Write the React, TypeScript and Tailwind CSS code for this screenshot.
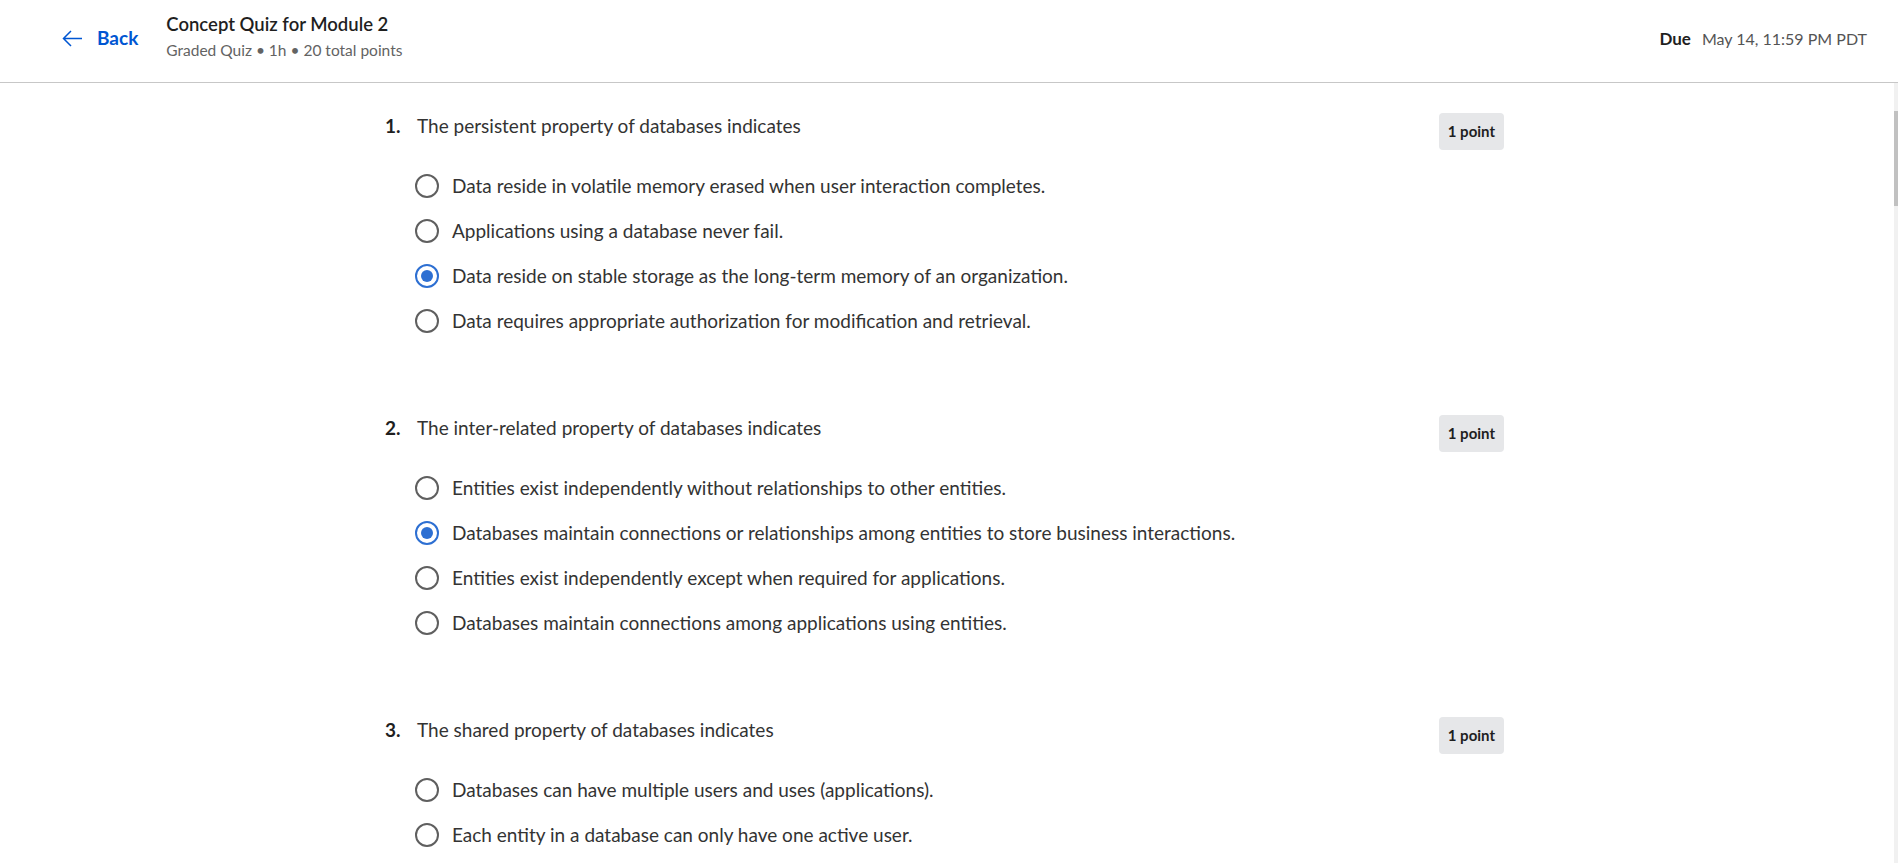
import React from "react";

type Question = {
  title: string;
  options: string[];
  selected: number | null;
};

const questions: Question[] = [
  {
    title: "The persistent property of databases indicates",
    options: [
      "Data reside in volatile memory erased when user interaction completes.",
      "Applications using a database never fail.",
      "Data reside on stable storage as the long-term memory of an organization.",
      "Data requires appropriate authorization for modification and retrieval.",
    ],
    selected: 2,
  },
  {
    title: "The inter-related property of databases indicates",
    options: [
      "Entities exist independently without relationships to other entities.",
      "Databases maintain connections or relationships among entities to store business interactions.",
      "Entities exist independently except when required for applications.",
      "Databases maintain connections among applications using entities.",
    ],
    selected: 1,
  },
  {
    title: "The shared property of databases indicates",
    options: [
      "Databases can have multiple users and uses (applications).",
      "Each entity in a database can only have one active user.",
    ],
    selected: null,
  },
];

const Radio = ({ checked }: { checked: boolean }) =>
  checked ? (
    <span className="w-6 h-6 shrink-0 rounded-full border-2 border-[#2d6fd2] flex items-center justify-center">
      <span className="w-3 h-3 rounded-full bg-[#2d6fd2]"></span>
    </span>
  ) : (
    <span className="w-6 h-6 shrink-0 rounded-full border-2 border-[#5f5f5f]"></span>
  );

const QuestionBlock = ({ q, n }: { q: Question; n: number }) => {
  return (
    <div className="mb-[72px]">
      <div className="flex items-start justify-between">
        <div className="flex pt-[1px] text-[19px] leading-6">
          <span className="w-8 font-bold text-[#1f1f1f]">{n}.</span>
          <span className="text-[#333333]">{q.title}</span>
        </div>
        <div className="h-[37px] px-[9px] flex items-center rounded-[4px] bg-[#e6e7e9] text-[15px] font-bold text-[#1f1f1f]">
          1 point
        </div>
      </div>
      <div className="mt-[13px] pl-[30px]">
        {q.options.map((opt, i) => (
          <div key={i} className="h-[45px] flex items-center gap-[13px]">
            <Radio checked={q.selected === i} />
            <span className="text-[19px] leading-6 text-[#333333]">{opt}</span>
          </div>
        ))}
      </div>
    </div>
  );
};

export default function App() {
  return (
    <div className="h-screen flex flex-col bg-white font-['Lato',sans-serif] text-[#1f1f1f] overflow-hidden">
      <header className="h-[83px] shrink-0 border-b border-[#c7c7c7] flex items-start justify-between pl-[62px] pr-[31px]">
        <div className="flex items-start">
          <button className="flex items-center gap-[14px] pt-[26px] text-[#0056d2]">
            <svg width="21" height="17" viewBox="0 0 21 17" fill="none">
              <path d="M20 8.5H1.5M9 1L1.5 8.5L9 16" stroke="#0056d2" strokeWidth="1.5" />
            </svg>
            <span className="text-[19px] leading-6 font-bold">Back</span>
          </button>
          <div className="ml-[28px] pt-[12px]">
            <p className="text-[18.5px] leading-6 font-semibold text-[#1f1f1f]">Concept Quiz for Module 2</p>
            <p className="mt-1 text-[15.5px] leading-5 text-[#636363]">Graded Quiz • 1h • 20 total points</p>
          </div>
        </div>
        <div className="pt-[27px] flex items-center gap-[11px] text-[16px] leading-6">
          <span className="text-[17px] font-bold text-[#1f1f1f]">Due</span>
          <span className="text-[#545454]">May 14, 11:59 PM PDT</span>
        </div>
      </header>
      <div className="flex-1 flex min-h-0">
        <main className="flex-1 overflow-hidden pl-[385px]">
          <div className="w-[1119px] pt-[30px]">
            {questions.map((q, i) => (
              <QuestionBlock key={i} q={q} n={i + 1} />
            ))}
          </div>
        </main>
        <div className="w-1 shrink-0 bg-[#f1f1f1]">
          <div className="mt-[28px] h-[95px] bg-[#c1c1c1]"></div>
        </div>
      </div>
    </div>
  );
}
